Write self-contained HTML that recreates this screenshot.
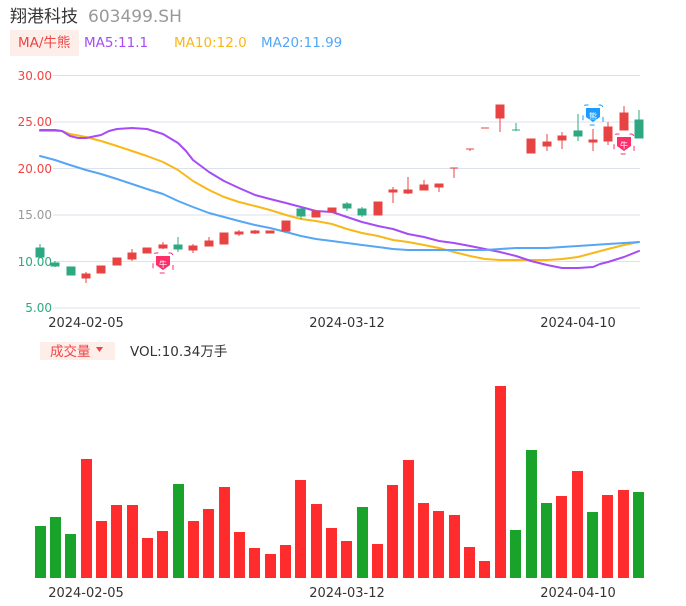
<!DOCTYPE html>
<html><head><meta charset="utf-8"><style>
body{margin:0;width:686px;height:606px;background:#fff;overflow:hidden;font-family:"Liberation Sans","Noto Sans CJK SC",sans-serif}
svg{position:absolute;left:0;top:0}
text{font-family:"DejaVu Sans","Noto Sans CJK SC",sans-serif}
polyline{stroke-linejoin:round;stroke-linecap:round}
</style></head><body>
<svg width="686" height="606" viewBox="0 0 686 606">
<text x="10" y="22" font-size="17" fill="#333" font-family="Noto Sans CJK SC,sans-serif">翔港科技</text>
<text x="88" y="22" font-size="17" fill="#999">603499.SH</text>
<rect x="10" y="30" width="69" height="26" fill="#fdeeea"/>
<text x="18" y="47" font-size="13.5" fill="#f04444">MA/牛熊</text>
<text x="84" y="47" font-size="13.5" fill="#a64cf5">MA5:11.1</text>
<text x="174" y="47" font-size="13.5" fill="#f9b718">MA10:12.0</text>
<text x="261" y="47" font-size="13.5" fill="#55a7f5">MA20:11.99</text>
<g stroke="#dde1ee" stroke-width="1">
<line x1="53" y1="75.5" x2="640" y2="75.5"/><line x1="53" y1="122" x2="640" y2="122"/><line x1="53" y1="168.5" x2="640" y2="168.5"/><line x1="53" y1="215" x2="640" y2="215"/><line x1="53" y1="261.5" x2="640" y2="261.5"/><line x1="53" y1="308" x2="640" y2="308"/>
</g>
<g font-size="12" text-anchor="end">
<text x="52" y="80" fill="#f04444">30.00</text><text x="52" y="126" fill="#f04444">25.00</text><text x="52" y="173" fill="#f04444">20.00</text><text x="52" y="219" fill="#999">15.00</text><text x="52" y="266" fill="#2ea882">10.00</text><text x="52" y="312" fill="#2ea882">5.00</text>
</g>
<g font-size="13" fill="#333" text-anchor="middle">
<text x="86" y="327">2024-02-05</text><text x="347" y="327">2024-03-12</text><text x="578" y="327">2024-04-10</text>
<text x="86" y="597">2024-02-05</text><text x="347" y="597">2024-03-12</text><text x="578" y="597">2024-04-10</text>
</g>
<polyline fill="none" stroke="#f9b718" stroke-width="2" points="40,131 55,131 62,131 70,134 86,137 101,141 117,146 132,151 147,156 163,162 178,170 193,181 209,190 224,197 239,202 255,206 270,210 286,215 301,219 316,221 332,224 347,229 362,233 378,236 393,240 408,242 424,245 439,248 454,252 470,256 485,259 500,260 516,260 531,260 547,260 562,259 578,257 593,253 608,249 624,245 639,242"/>
<polyline fill="none" stroke="#a64cf5" stroke-width="2" points="40,130 55,130 62,131 70,136 78,138 86,138 101,135 109,131 117,129 132,128 147,129 163,134 178,143 186,151 193,160 209,172 224,181 239,188 255,195 270,199 286,203 301,207 316,211 332,212 347,217 362,222 378,226 393,229 408,234 424,237 439,241 454,243 470,246 485,249 500,252 516,256 531,261 547,265 562,268 578,268 593,267 600,264 608,262 624,257 639,251"/>
<polyline fill="none" stroke="#55a7f5" stroke-width="2" points="40,156 55,160 70,165 86,170 101,174 117,179 132,184 147,189 163,194 178,201 193,207 209,213 224,217 239,221 255,225 270,228 286,232 301,236 316,239 332,241 347,243 362,245 378,247 393,249 408,250 424,250 439,250 454,250 470,250 485,250 500,249 516,248 531,248 547,248 562,247 578,246 593,245 608,244 624,243 639,242"/>
<g stroke-width="1">
<g fill="#2ea882" stroke="#2ea882">
<line x1="40" y1="244" x2="40" y2="258"/><rect x="36" y="248" width="8" height="9"/>
<rect x="51" y="263" width="8" height="3"/><line x1="55" y1="261" x2="55" y2="267"/>
<rect x="67" y="267" width="8" height="8"/>
<line x1="178" y1="237" x2="178" y2="252"/><rect x="174" y="245" width="8" height="4"/>
<rect x="297" y="209" width="8" height="7"/><line x1="301" y1="207" x2="301" y2="219"/>
<rect x="343" y="204" width="8" height="4"/><line x1="347" y1="202" x2="347" y2="211"/>
<rect x="358" y="209" width="8" height="6"/><line x1="362" y1="207" x2="362" y2="217"/>
<line x1="512" y1="130" x2="520" y2="130"/><line x1="516" y1="123" x2="516" y2="131"/>
<line x1="578" y1="114" x2="578" y2="141"/><rect x="574" y="131" width="8" height="5"/>
<line x1="639" y1="110" x2="639" y2="138"/><rect x="635" y="120" width="8" height="18"/>
</g>
<g fill="#e84343" stroke="#e84343">
<line x1="86" y1="272" x2="86" y2="283"/><rect x="82" y="274" width="8" height="4"/>
<rect x="97" y="266" width="8" height="7"/>
<rect x="113" y="258" width="8" height="7"/>
<line x1="132" y1="249" x2="132" y2="261"/><rect x="128" y="253" width="8" height="6"/>
<rect x="143" y="248" width="8" height="5"/>
<line x1="163" y1="242" x2="163" y2="249"/><rect x="159" y="245" width="8" height="3"/>
<line x1="193" y1="244" x2="193" y2="253"/><rect x="189" y="246" width="8" height="4"/>
<line x1="209" y1="237" x2="209" y2="246"/><rect x="205" y="241" width="8" height="5"/>
<rect x="220" y="233" width="8" height="11"/>
<line x1="239" y1="230" x2="239" y2="236"/><rect x="235" y="232" width="8" height="2"/>
<line x1="255" y1="230" x2="255" y2="234"/><rect x="251" y="231" width="8" height="2"/>
<rect x="266" y="231" width="8" height="2"/>
<rect x="282" y="221" width="8" height="10"/>
<rect x="312" y="211" width="8" height="6"/>
<rect x="328" y="208" width="8" height="4"/>
<rect x="374" y="202" width="8" height="13"/>
<line x1="393" y1="187" x2="393" y2="203"/><rect x="389" y="190" width="8" height="2"/>
<line x1="408" y1="177" x2="408" y2="194"/><rect x="404" y="190" width="8" height="3"/>
<line x1="424" y1="180" x2="424" y2="190"/><rect x="420" y="185" width="8" height="5"/>
<line x1="439" y1="184" x2="439" y2="192"/><rect x="435" y="184" width="8" height="3"/>
<line x1="450" y1="168" x2="458" y2="168"/><line x1="454" y1="168" x2="454" y2="178"/>
<line x1="466" y1="149" x2="474" y2="149"/><line x1="470" y1="149" x2="470" y2="151"/>
<line x1="481" y1="128" x2="489" y2="128"/>
<line x1="500" y1="105" x2="500" y2="132"/><rect x="496" y="105" width="8" height="13"/>
<rect x="527" y="139" width="8" height="14"/>
<line x1="547" y1="134" x2="547" y2="151"/><rect x="543" y="142" width="8" height="4"/>
<line x1="562" y1="132" x2="562" y2="149"/><rect x="558" y="136" width="8" height="4"/>
<line x1="593" y1="129" x2="593" y2="151"/><rect x="589" y="140" width="8" height="2"/>
<line x1="608" y1="122" x2="608" y2="145"/><rect x="604" y="127" width="8" height="14"/>
<line x1="624" y1="106" x2="624" y2="130"/><rect x="620" y="113" width="8" height="17"/>
</g></g>
<g><rect x="153" y="253" width="20" height="20" fill="none" stroke="#ff2d6a" stroke-dasharray="5 10" stroke-dashoffset="2.5" rx="3"/><path d="M156 256h14v9l-7 5-7-5z" fill="#ff2d6a"/><text x="163" y="267" font-size="8" fill="#fff" text-anchor="middle">牛</text></g>
<g><rect x="583" y="105" width="20" height="20" fill="none" stroke="#1a9bff" stroke-dasharray="5 10" stroke-dashoffset="2.5" rx="3"/><path d="M586 108h14v9l-7 5-7-5z" fill="#1a9bff"/><text x="593" y="119" font-size="8" fill="#fff" text-anchor="middle">熊</text></g>
<g><rect x="614" y="134" width="20" height="20" fill="none" stroke="#ff2d6a" stroke-dasharray="5 10" stroke-dashoffset="2.5" rx="3"/><path d="M617 137h14v9l-7 5-7-5z" fill="#ff2d6a"/><text x="624" y="148" font-size="8" fill="#fff" text-anchor="middle">牛</text></g>
<rect x="40" y="342" width="75" height="18" fill="#fdeeea"/>
<text x="50" y="356" font-size="13.5" fill="#f04444" font-family="Noto Sans CJK SC,sans-serif">成交量</text>
<path d="M96 347h7l-3.5 5z" fill="#f04444"/>
<text x="130" y="356" font-size="13.5" fill="#333">VOL:10.34万手</text>
<g>
<rect x="35" y="526" width="11" height="52" fill="#1aa32a"/><rect x="50" y="517" width="11" height="61" fill="#1aa32a"/><rect x="65" y="534" width="11" height="44" fill="#1aa32a"/>
<rect x="81" y="459" width="11" height="119" fill="#fe2c2c"/><rect x="96" y="521" width="11" height="57" fill="#fe2c2c"/><rect x="111" y="505" width="11" height="73" fill="#fe2c2c"/><rect x="127" y="505" width="11" height="73" fill="#fe2c2c"/><rect x="142" y="538" width="11" height="40" fill="#fe2c2c"/><rect x="157" y="531" width="11" height="47" fill="#fe2c2c"/>
<rect x="173" y="484" width="11" height="94" fill="#1aa32a"/>
<rect x="188" y="521" width="11" height="57" fill="#fe2c2c"/><rect x="203" y="509" width="11" height="69" fill="#fe2c2c"/><rect x="219" y="487" width="11" height="91" fill="#fe2c2c"/><rect x="234" y="532" width="11" height="46" fill="#fe2c2c"/><rect x="249" y="548" width="11" height="30" fill="#fe2c2c"/><rect x="265" y="554" width="11" height="24" fill="#fe2c2c"/><rect x="280" y="545" width="11" height="33" fill="#fe2c2c"/><rect x="295" y="480" width="11" height="98" fill="#fe2c2c"/><rect x="311" y="504" width="11" height="74" fill="#fe2c2c"/><rect x="326" y="528" width="11" height="50" fill="#fe2c2c"/><rect x="341" y="541" width="11" height="37" fill="#fe2c2c"/>
<rect x="357" y="507" width="11" height="71" fill="#1aa32a"/>
<rect x="372" y="544" width="11" height="34" fill="#fe2c2c"/><rect x="387" y="485" width="11" height="93" fill="#fe2c2c"/><rect x="403" y="460" width="11" height="118" fill="#fe2c2c"/><rect x="418" y="503" width="11" height="75" fill="#fe2c2c"/><rect x="433" y="511" width="11" height="67" fill="#fe2c2c"/><rect x="449" y="515" width="11" height="63" fill="#fe2c2c"/><rect x="464" y="547" width="11" height="31" fill="#fe2c2c"/><rect x="479" y="561" width="11" height="17" fill="#fe2c2c"/><rect x="495" y="386" width="11" height="192" fill="#fe2c2c"/>
<rect x="510" y="530" width="11" height="48" fill="#1aa32a"/><rect x="526" y="450" width="11" height="128" fill="#1aa32a"/><rect x="541" y="503" width="11" height="75" fill="#1aa32a"/>
<rect x="556" y="496" width="11" height="82" fill="#fe2c2c"/><rect x="572" y="471" width="11" height="107" fill="#fe2c2c"/>
<rect x="587" y="512" width="11" height="66" fill="#1aa32a"/>
<rect x="602" y="495" width="11" height="83" fill="#fe2c2c"/><rect x="618" y="490" width="11" height="88" fill="#fe2c2c"/>
<rect x="633" y="492" width="11" height="86" fill="#1aa32a"/>
</g>
</svg>
</body></html>
